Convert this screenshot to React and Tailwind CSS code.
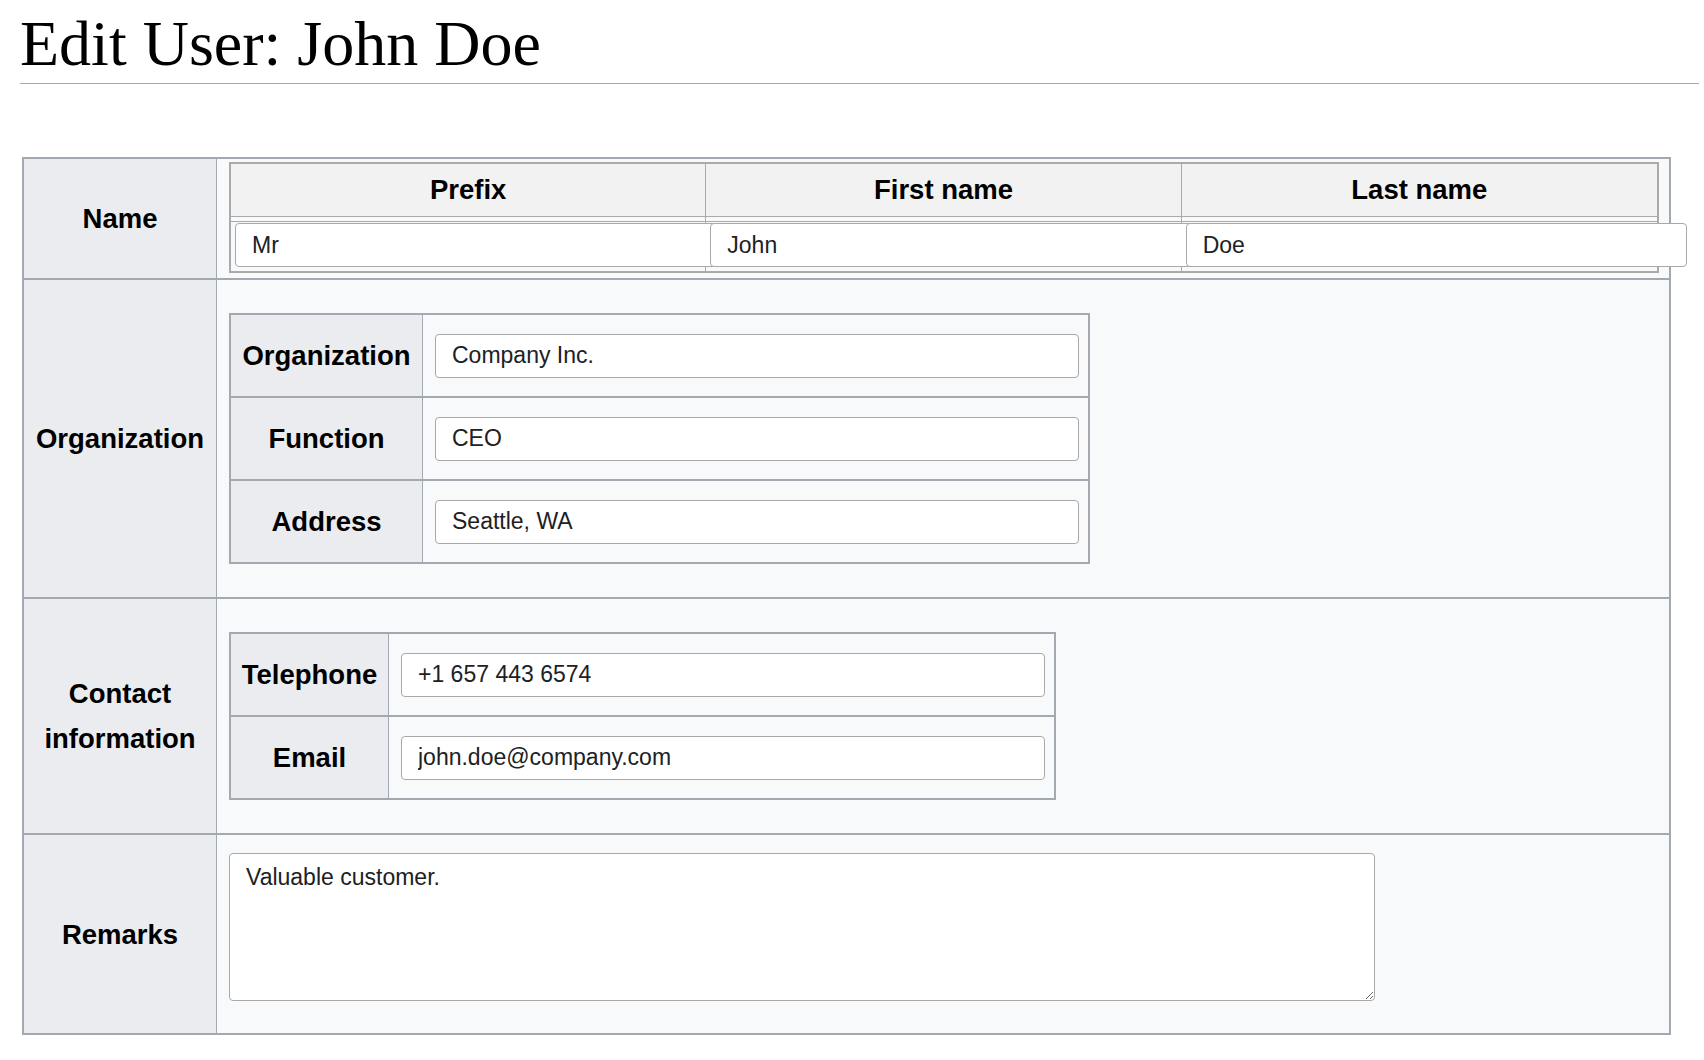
const nameCols = [
  { title: 'Prefix', value: 'Mr' },
  { title: 'First name', value: 'John' },
  { title: 'Last name', value: 'Doe' },
];

const orgFields = [
  { label: 'Organization', value: 'Company Inc.' },
  { label: 'Function', value: 'CEO' },
  { label: 'Address', value: 'Seattle, WA' },
];

const contactFields = [
  { label: 'Telephone', value: '+1 657 443 6574' },
  { label: 'Email', value: 'john.doe@company.com' },
];

const inputCls =
  'block h-[44px] w-[644px] rounded-[4px] border border-[#a9a9a9] bg-white pl-[16px] text-[23px] text-[#202122] outline-none';

const RowLabel = ({ children }) => (
  <div className="flex w-[193px] shrink-0 items-center justify-center border-r border-[#a2a9b1] bg-[#eaecf0] px-[8px] text-center text-[27.5px] font-bold leading-[45px] text-black">
    {children}
  </div>
);

const FieldTable = ({ fields, labelWidth, width }) => (
  <div className={`${width} border-2 border-[#a2a9b1]`}>
    {fields.map((f, i) => (
      <div key={f.label} className={`flex ${i > 0 ? 'h-[83px] border-t-2 border-[#a2a9b1]' : 'h-[81px]'}`}>
        <div className={`${labelWidth} flex shrink-0 items-center justify-center border-r border-[#a2a9b1] bg-[#eaecf0] text-[27.5px] font-bold text-black`}>
          {f.label}
        </div>
        <div className="flex flex-1 items-center bg-[#f8f9fa] pl-[12px]">
          <input className={inputCls} defaultValue={f.value} />
        </div>
      </div>
    ))}
  </div>
);

export default function App() {
  return (
    <div className="min-h-screen bg-white pl-[20px] pr-[5px] font-['Liberation_Sans',Arial,sans-serif] text-[#202122]">
      <h1 className="mt-[12px] border-b border-[#a2a9b1] pb-[7px] font-['Liberation_Serif','Times_New_Roman',serif] text-[64px] font-normal leading-[64px] text-black">
        Edit User: John Doe
      </h1>

      <div className="ml-[2px] mt-[73px] w-[1649px] border-2 border-[#a2a9b1] bg-[#f8f9fa]">
        {/* Name */}
        <div className="flex border-b-2 border-[#a2a9b1]">
          <RowLabel>Name</RowLabel>
          <div className="flex-1 pb-[5px] pl-[12px] pr-[10px] pt-[3px]">
            <div className="border-2 border-[#aaaaaa]">
              <div className="grid h-[53px] grid-cols-3 border-b border-[#aaaaaa] bg-[#f2f2f2]">
                {nameCols.map((c, i) => (
                  <div
                    key={c.title}
                    className={`flex items-center justify-center text-[27.5px] font-bold text-black ${i < 2 ? 'border-r border-[#aaaaaa]' : ''}`}
                  >
                    {c.title}
                  </div>
                ))}
              </div>
              <div className="grid grid-cols-3">
                {nameCols.map((c, i) => (
                  <div key={c.title} className={`pt-[4px] ${i < 2 ? 'border-r border-[#aaaaaa]' : ''}`}>
                    <div className="border-t border-[#aaaaaa] pb-[4px] pl-[4px] pt-[1px]">
                      <input
                        className="relative block h-[44px] w-[501px] rounded-[4px] border border-[#a9a9a9] bg-white pl-[16px] text-[23px] text-[#202122] outline-none"
                        defaultValue={c.value}
                      />
                    </div>
                  </div>
                ))}
              </div>
            </div>
          </div>
        </div>

        {/* Organization */}
        <div className="flex border-b-2 border-[#a2a9b1]">
          <RowLabel>Organization</RowLabel>
          <div className="flex-1 py-[33px] pl-[12px]">
            <FieldTable fields={orgFields} labelWidth="w-[192px]" width="w-[861px]" />
          </div>
        </div>

        {/* Contact */}
        <div className="flex border-b-2 border-[#a2a9b1]">
          <RowLabel>
            Contact
            <br />
            information
          </RowLabel>
          <div className="flex-1 py-[33px] pl-[12px]">
            <FieldTable fields={contactFields} labelWidth="w-[158px]" width="w-[827px]" />
          </div>
        </div>

        {/* Remarks */}
        <div className="flex">
          <RowLabel>Remarks</RowLabel>
          <div className="flex-1 pb-[32px] pl-[12px] pt-[18px]">
            <textarea
              className="block h-[148px] w-[1146px] rounded-[4px] border border-[#a9a9a9] bg-white px-[16px] pt-[10px] text-[23px] leading-[26px] text-[#202122] outline-none"
              defaultValue="Valuable customer."
            />
          </div>
        </div>
      </div>
    </div>
  );
}
